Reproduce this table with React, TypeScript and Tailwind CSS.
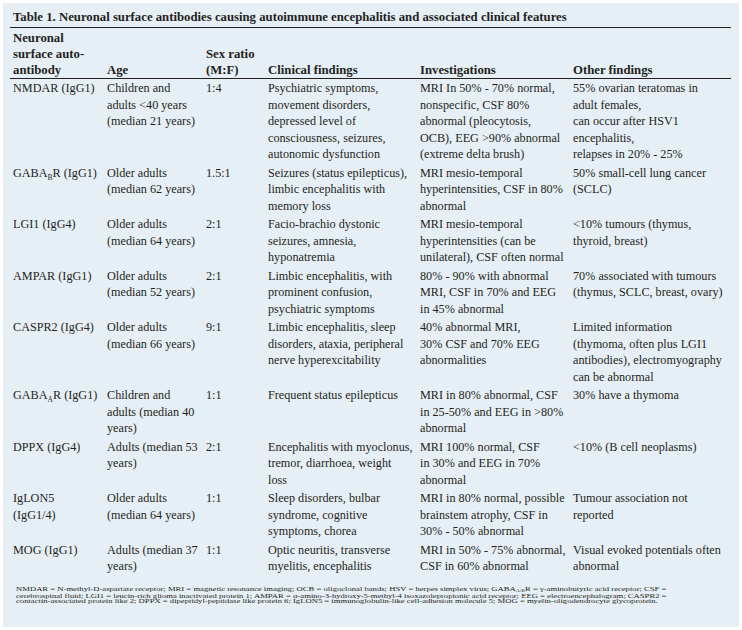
import type { ReactNode } from 'react'

type Row = {
  ab: ReactNode[]
  age: string[]
  ratio: string
  clinical: string[]
  inv: string[]
  other: string[]
}

const gaba = (sub: string) => (
  <>
    GABA<sub className="relative top-[3px] align-baseline text-[7.5px] leading-none">{sub}</sub>R (IgG1)
  </>
)

const rows: Row[] = [
  {
    ab: ['NMDAR (IgG1)'],
    age: ['Children and', 'adults <40 years', '(median 21 years)'],
    ratio: '1:4',
    clinical: ['Psychiatric symptoms,', 'movement disorders,', 'depressed level of', 'consciousness, seizures,', 'autonomic dysfunction'],
    inv: ['MRI In 50% - 70% normal,', 'nonspecific, CSF 80%', 'abnormal (pleocytosis,', 'OCB), EEG >90% abnormal', '(extreme delta brush)'],
    other: ['55% ovarian teratomas in', 'adult females,', 'can occur after HSV1', 'encephalitis,', 'relapses in 20% - 25%'],
  },
  {
    ab: [gaba('B')],
    age: ['Older adults', '(median 62 years)'],
    ratio: '1.5:1',
    clinical: ['Seizures (status epilepticus),', 'limbic encephalitis with', 'memory loss'],
    inv: ['MRI mesio-temporal', 'hyperintensities, CSF in 80%', 'abnormal'],
    other: ['50% small-cell lung cancer', '(SCLC)'],
  },
  {
    ab: ['LGI1 (IgG4)'],
    age: ['Older adults', '(median 64 years)'],
    ratio: '2:1',
    clinical: ['Facio-brachio dystonic', 'seizures, amnesia,', 'hyponatremia'],
    inv: ['MRI mesio-temporal', 'hyperintensities (can be', 'unilateral), CSF often normal'],
    other: ['<10% tumours (thymus,', 'thyroid, breast)'],
  },
  {
    ab: ['AMPAR (IgG1)'],
    age: ['Older adults', '(median 52 years)'],
    ratio: '2:1',
    clinical: ['Limbic encephalitis, with', 'prominent confusion,', 'psychiatric symptoms'],
    inv: ['80% - 90% with abnormal', 'MRI, CSF in 70% and EEG', 'in 45% abnormal'],
    other: ['70% associated with tumours', '(thymus, SCLC, breast, ovary)'],
  },
  {
    ab: ['CASPR2 (IgG4)'],
    age: ['Older adults', '(median 66 years)'],
    ratio: '9:1',
    clinical: ['Limbic encephalitis, sleep', 'disorders, ataxia, peripheral', 'nerve hyperexcitability'],
    inv: ['40% abnormal MRI,', '30% CSF and 70% EEG', 'abnormalities'],
    other: ['Limited information', '(thymoma, often plus LGI1', 'antibodies), electromyography', 'can be abnormal'],
  },
  {
    ab: [gaba('A')],
    age: ['Children and', 'adults (median 40', 'years)'],
    ratio: '1:1',
    clinical: ['Frequent status epilepticus'],
    inv: ['MRI in 80% abnormal, CSF', 'in 25-50% and EEG in >80%', 'abnormal'],
    other: ['30% have a thymoma'],
  },
  {
    ab: ['DPPX (IgG4)'],
    age: ['Adults (median 53', 'years)'],
    ratio: '2:1',
    clinical: ['Encephalitis with myoclonus,', 'tremor, diarrhoea, weight', 'loss'],
    inv: ['MRI 100% normal, CSF', 'in 30% and EEG in 70%', 'abnormal'],
    other: ['<10% (B cell neoplasms)'],
  },
  {
    ab: ['IgLON5', '(IgG1/4)'],
    age: ['Older adults', '(median 64 years)'],
    ratio: '1:1',
    clinical: ['Sleep disorders, bulbar', 'syndrome, cognitive', 'symptoms, chorea'],
    inv: ['MRI in 80% normal, possible', 'brainstem atrophy, CSF in', '30% - 50% abnormal'],
    other: ['Tumour association not', 'reported'],
  },
  {
    ab: ['MOG (IgG1)'],
    age: ['Adults (median 37', 'years)'],
    ratio: '1:1',
    clinical: ['Optic neuritis, transverse', 'myelitis, encephalitis'],
    inv: ['MRI in 50% - 75% abnormal,', 'CSF in 60% abnormal'],
    other: ['Visual evoked potentials often', 'abnormal'],
  },
]

const cols = 'grid grid-cols-[94px_99px_62px_152px_153px_1fr]'

function Cell({ lines }: { lines: ReactNode[] }) {
  return (
    <div className="pl-[3px]">
      {lines.map((l, i) => (
        <div key={i} className="whitespace-nowrap">{l}</div>
      ))}
    </div>
  )
}

export default function App() {
  return (
    <div className="h-[630px] w-[742px] bg-white p-[3px]" style={{ fontFamily: '"Liberation Serif", "Times New Roman", serif' }}>
      <div className="h-full bg-[#e7eff6] px-[7px] pt-[6px] text-[#231f20]">
        <div className="mr-[1px] border-b-[1.5px] border-[#231f20] pb-[2px] pl-[3px] text-[12.75px] font-bold leading-[16px]">
          Table 1. Neuronal surface antibodies causing autoimmune encephalitis and associated clinical features
        </div>

        <div className={`${cols} mr-[1px] items-end border-b-[1.5px] border-[#231f20] pt-[2px] text-[12.75px] font-bold leading-[16px]`}>
          <Cell lines={['Neuronal', 'surface auto-', 'antibody']} />
          <Cell lines={['Age']} />
          <Cell lines={['Sex ratio', '(M:F)']} />
          <Cell lines={['Clinical findings']} />
          <Cell lines={['Investigations']} />
          <Cell lines={['Other findings']} />
        </div>

        <div className="text-[12.2px] leading-[16.5px]">
          {rows.map((r, i) => (
            <div key={i} className={`${cols} py-[1px]`}>
              <Cell lines={r.ab} />
              <Cell lines={r.age} />
              <Cell lines={[r.ratio]} />
              <Cell lines={r.clinical} />
              <Cell lines={r.inv} />
              <Cell lines={r.other} />
            </div>
          ))}
        </div>

        <div className="mt-[10px] h-[30px] pl-[6px]">
          <p className="origin-top-left scale-y-[0.72] whitespace-nowrap text-[8.65px] leading-[8.6px]">
            NMDAR = N-methyl-D-aspartate receptor; MRI = magnetic resonance imaging; OCB = oligoclonal bands; HSV = herpes simplex virus; GABA<sub className="align-baseline text-[5.5px] leading-none">A/B</sub>R = γ-aminobutyric acid receptor; CSF =
            <br />
            cerebrospinal fluid; LGI1 = leucin-rich glioma inactivated protein 1; AMPAR = α-amino-3-hydroxy-5-methyl-4 isoxazolepropionic acid receptor; EEG = electroencephalogram; CASPR2 =
            <br />
            contactin-associated protein like 2; DPPX = dipeptidyl-peptidase like protein 6; IgLON5 = immunoglobulin-like cell-adhesion molecule 5; MOG = myelin-oligodendrocyte glycoprotein.
          </p>
        </div>
      </div>
    </div>
  )
}
